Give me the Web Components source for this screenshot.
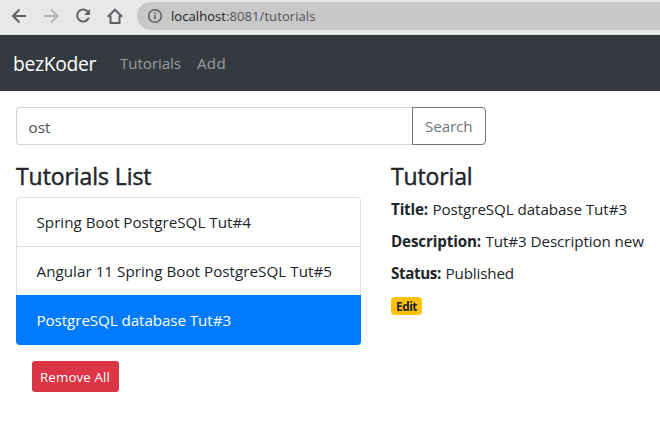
<!DOCTYPE html>
<html lang="en">
<head>
<meta charset="utf-8">
<title>Tutorials</title>
<style>
html,body{margin:0;height:100%;background:#fff;overflow:hidden}
body{font:15.2px/24px "Open Sans","Noto Sans",sans-serif;color:#212529}
</style>
</head>
<body>
<tutorial-app></tutorial-app>
<script>
const define = (name, html, setup) => {
  const template = document.createElement('template');
  template.innerHTML = html;
  customElements.define(name, class extends HTMLElement {
    constructor() {
      super();
      this.attachShadow({mode: 'open'}).append(template.content.cloneNode(true));
    }
    connectedCallback() { if (setup) setup(this); }
  });
};

// A text run spaced evenly to the advance width given in "w".
define('text-run', `<style>
:host{display:inline-block;white-space:pre}
span{display:inline-block;white-space:pre}
</style><span></span>`, el => {
  const span = el.shadowRoot.querySelector('span');
  span.textContent = el.getAttribute('text');
  const target = parseFloat(el.getAttribute('w'));
  const natural = span.getBoundingClientRect().width;
  span.style.letterSpacing = (target - natural) / span.textContent.length + 'px';
  el.style.width = target + 'px';
});

define('browser-bar', `<style>
:host{display:flex;height:35px;box-sizing:border-box;background:#e8e8e9;border-bottom:1px solid #dfe1e5;padding:2px 0 4px 11px}
.icons{display:flex;gap:16px;padding-top:6px;width:126px;box-sizing:border-box}
svg{display:block;width:16px;height:16px;flex:none;fill:none;stroke:#5f6368;stroke-width:2}
.address{flex:1;height:28px;display:flex;align-items:center;gap:8px;padding-left:10px;border-radius:14px 0 0 14px;background:#c8c8c8;font-size:13px;color:#505357}
.host{color:#202124}
.address svg{stroke-width:1.6}
</style>
<div class="icons">
<svg viewBox="0 0 16 16"><path d="M15 8H2.5M8.5 1.5 2 8l6.500 6.500"/></svg>
<svg viewBox="0 0 16 16" style="stroke:#b2b3b5"><path d="M1 8h13M8 1.5 14.5 8 8 14.5"/></svg>
<svg viewBox="0 0 16 16"><path d="M13.200 4.200A6 6 0 1 0 13.800 9.700"/><path d="M15 1v6H9z" fill="#5f6368" stroke="none"/></svg>
<svg viewBox="0 0 16 16"><path d="M.8 8.800 8 1.700l7.200 7.100M3.500 7.500V15h9V7.500"/></svg>
</div>
<div class="address"><svg viewBox="0 0 16 16"><circle cx="8" cy="8" r="6.3"/><path d="M8 7v4.300M8 4.400V6"/></svg><div><text-run class="host" text="localhost" w="55"></text-run><text-run text=":8081/tutorials" w="89.5"></text-run></div></div>`);

define('nav-bar', `<style>
:host{display:flex;align-items:center;height:56px;background:#343a40;padding-left:13px;color:#9a9da0}
.brand{font-size:19.3px;line-height:30px;color:#fff;margin:1px 24px 0 0}
.link{margin-right:16px}
</style>
<text-run class="brand" text="bezKoder" w="83"></text-run><text-run class="link" text="Tutorials" w="61"></text-run><text-run text="Add" w="29"></text-run>`);

define('search-box', `<style>
:host{display:flex;width:470px;height:38px}
div{box-sizing:border-box;border:1px solid #ced4da;padding:7px 12px 5px 11.5px;color:#495057}
.field{flex:1;border-right:0;border-radius:4px 0 0 4px}
.button{width:74px;padding:6px 12px;border-color:#6c757d;border-radius:0 4px 4px 0;color:#6c757d}
</style><div class="field"><text-run text="ost" w="22"></text-run></div><div class="button"><text-run text="Search" w="47.5"></text-run></div>`);

define('section-title', `<style>:host{display:block;font-size:23px;-webkit-text-stroke:.45px currentColor;line-height:29px;height:29px;padding-top:1px;margin-bottom:6px}</style><slot></slot>`);

define('list-item', `<style>
:host{display:block;box-sizing:border-box;height:49px;padding:12px 20px 12px 19.5px;border:1px solid #dfdfdf;border-bottom:0}
:host(:first-child){border-radius:4px 4px 0 0}
:host([active]){height:50px;background:#007bff;border-color:#007bff;color:#fff;border-radius:0 0 4px 4px}
</style><slot></slot>`);

define('tutorial-list', `<style>
:host{display:block;width:345px}
.remove{display:block;box-sizing:border-box;margin:16px 0 0 16px;width:87px;height:31px;padding:6px 8px 4px;border-radius:3px;background:#dc3545;color:#fff;font-size:13.3px;line-height:21px}
</style>
<section-title><text-run text="Tutorials List" w="135.5"></text-run></section-title>
<div><list-item><text-run text="Spring Boot PostgreSQL Tut#4" w="214.5"></text-run></list-item><list-item><text-run text="Angular 11 Spring Boot PostgreSQL Tut#5" w="295.5"></text-run></list-item><list-item active><text-run text="PostgreSQL database Tut#3" w="194.5"></text-run></list-item></div>
<div class="remove"><text-run text="Remove All" w="70"></text-run></div>`);

define('tutorial-detail', `<style>
:host{display:block}
p{margin:0 0 8px;height:24px;display:flex;gap:4.5px}
b{font-weight:700}
.edit{width:31px;height:18px;box-sizing:border-box;padding:0 5px;margin-top:4px;border-radius:4px;background:#ffc107;font-size:11.8px;font-weight:700;line-height:19px}
p:last-of-type{margin-bottom:12px}
.edit{margin-top:0}
</style>
<section-title><text-run text="Tutorial" w="81.5"></text-run></section-title>
<p><b><text-run text="Title:" w="37"></text-run></b><text-run text="PostgreSQL database Tut#3" w="194.5"></text-run></p>
<p><b><text-run text="Description:" w="90"></text-run></b><text-run text="Tut#3 Description new" w="158.5"></text-run></p>
<p><b><text-run text="Status:" w="50"></text-run></b><text-run text="Published" w="68.5"></text-run></p>
<div class="edit"><text-run text="Edit" w="21"></text-run></div>`);

define('tutorial-app', `<style>
:host{display:block}
main{padding:16px 0 0 16px}
.columns{display:grid;grid-template-columns:345px 1fr;column-gap:30px;margin-top:16px}
</style>
<browser-bar></browser-bar><nav-bar></nav-bar>
<main><search-box></search-box><div class="columns"><tutorial-list></tutorial-list><tutorial-detail></tutorial-detail></div></main>`);
</script>
</body>
</html>
